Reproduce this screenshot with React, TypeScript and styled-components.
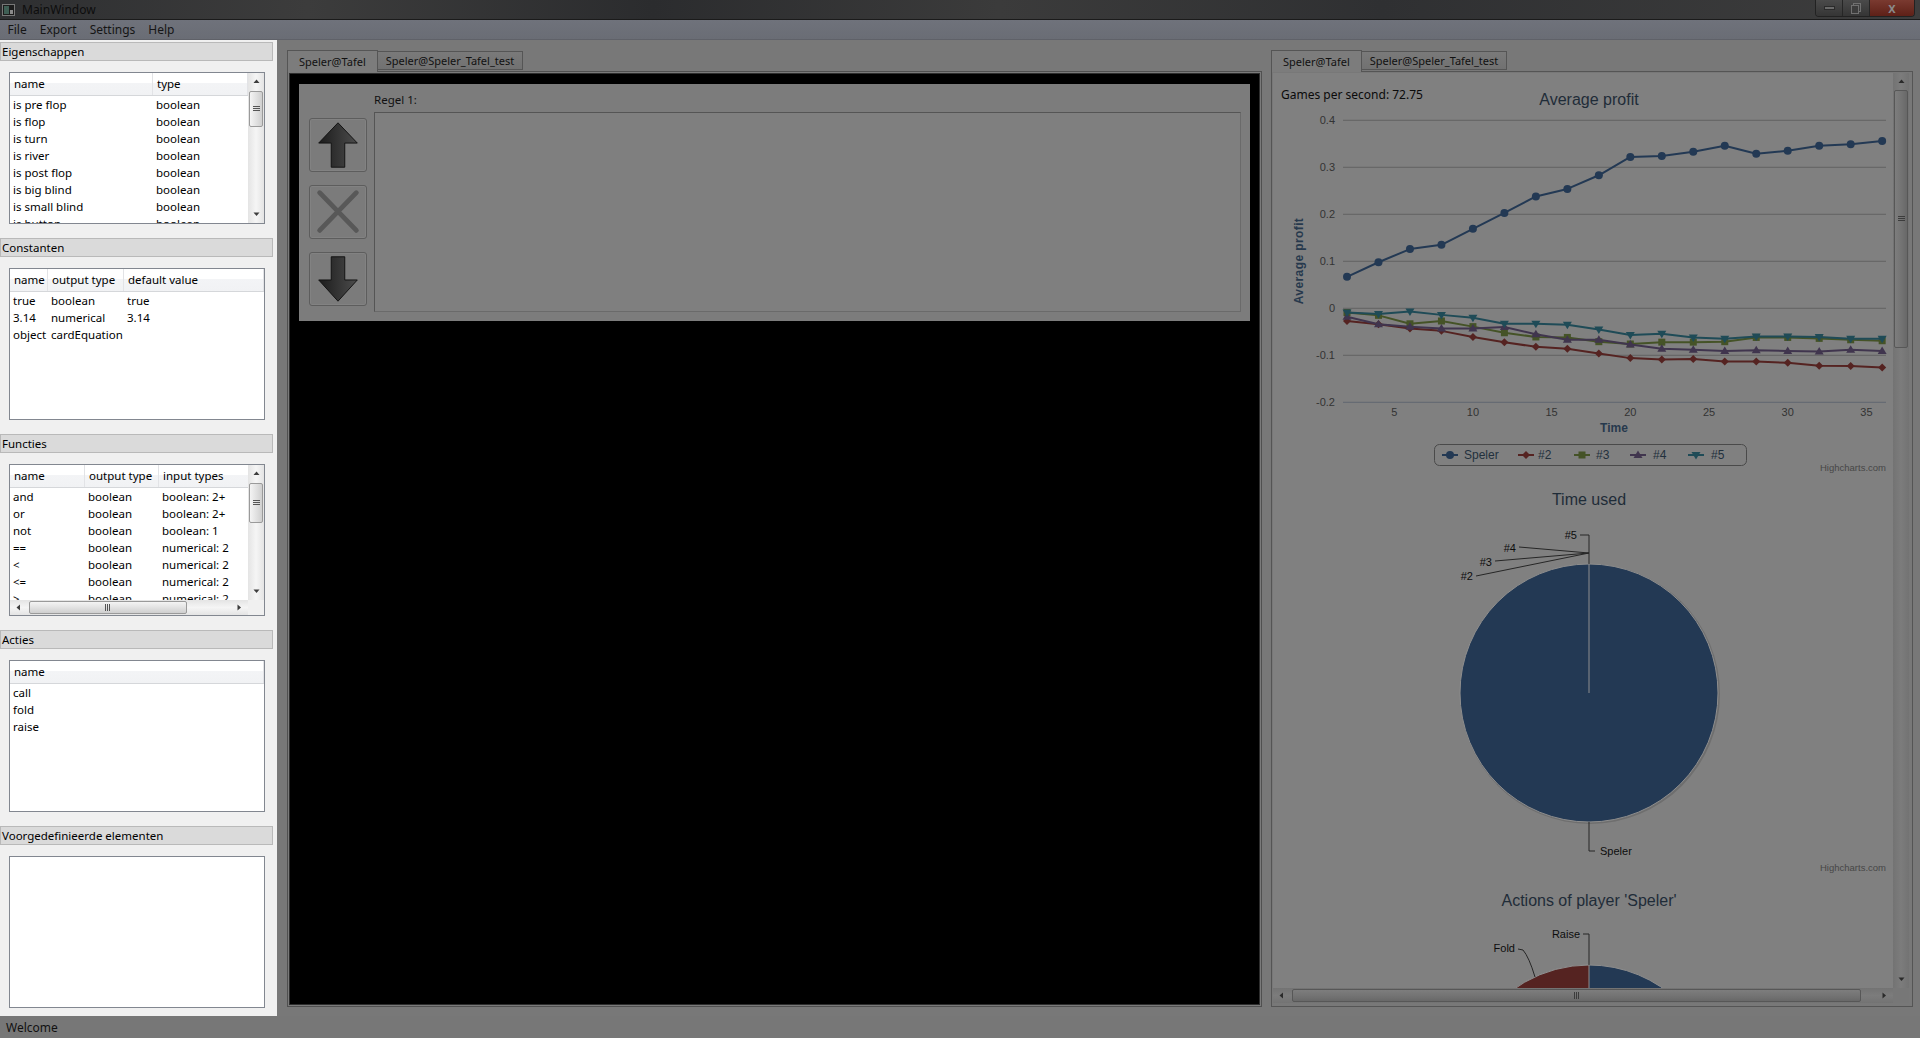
import React from "react";
import styled, { createGlobalStyle } from "styled-components";

const GlobalStyle = createGlobalStyle`
  *, *::before, *::after { box-sizing: border-box; }
  html, body { margin: 0; padding: 0; background: #787878; }
  body {
    font-family: "Noto Sans", "Liberation Sans", sans-serif;
    font-size: 11.5px;
    color: #000;
  }
  #root { width: 1920px; height: 1038px; overflow: hidden; }
`;

/* ---------- window chrome ---------- */

const Window = styled.div`
  width: 1920px;
  height: 1038px;
  display: flex;
  flex-direction: column;
  background: #787878;
`;

const TitleBar = styled.div`
  height: 20px;
  flex: none;
  display: flex;
  align-items: flex-start;
  justify-content: space-between;
  background: linear-gradient(90deg, #2e2f31 0%, #3c3c3c 16%, #2b2c2e 34%, #3b3b3b 52%, #2f3032 72%, #3d3d3d 100%);
  border-bottom: 1px solid #1b1b1b;
`;

const TitleLeft = styled.div`
  display: flex;
  align-items: center;
  gap: 7px;
  height: 19px;
  padding-left: 2px;
`;

const TitleText = styled.span`
  font-size: 12px;
  color: #0d0d0d;
`;

const WindowButtons = styled.div`
  display: flex;
  margin-right: 5px;
  border: 1px solid #222;
  border-top: none;
  border-radius: 0 0 4px 4px;
  overflow: hidden;
  height: 17px;
`;

const WinButton = styled.div<{ $close?: boolean }>`
  width: ${p => (p.$close ? "44px" : "27px")};
  display: flex;
  align-items: center;
  justify-content: center;
  background: ${p =>
    p.$close
      ? "linear-gradient(#7a3a30, #5e2017)"
      : "linear-gradient(#4a4a4a, #353535)"};
  border-right: ${p => (p.$close ? "none" : "1px solid #262626")};
  color: #8a8a8a;
  font-size: 11px;
  font-weight: bold;
`;

const MenuBar = styled.div`
  height: 20px;
  flex: none;
  display: flex;
  align-items: center;
  padding-left: 1px;
  background: linear-gradient(#6f727b, #6a6d75);
  border-bottom: 1px solid #5f6168;
`;

const MenuItem = styled.span`
  padding: 0 6.5px;
  font-size: 12px;
  color: #151515;
`;

const Body = styled.div`
  flex: 1;
  display: flex;
  min-height: 0;
`;

const StatusBar = styled.div`
  height: 22px;
  flex: none;
  display: flex;
  align-items: center;
  padding-left: 6px;
  background: #777;
  font-size: 12px;
  color: #111;
`;

/* ---------- dock ---------- */

const Dock = styled.div`
  width: 277px;
  flex: none;
  background: #f0f0f0;
  padding: 2px 4px 9px 0;
  display: flex;
  flex-direction: column;
`;

const DockSection = styled.section`
  display: flex;
  flex-direction: column;
  margin-bottom: 14px;
`;

const DockHeader = styled.div`
  height: 19px;
  line-height: 17px;
  padding-left: 1px;
  background: #dadada;
  border: 1px solid #b9b9b9;
  font-size: 11.5px;
  color: #000;
`;

const ListBox = styled.div<{ $v: boolean; $h: boolean }>`
  margin: 11px 0 0 9px;
  width: 256px;
  height: 152px;
  border: 1px solid #828790;
  background: #fff;
  display: grid;
  grid-template-columns: ${p => (p.$v ? "minmax(0, 1fr) 16px" : "minmax(0, 1fr)")};
  grid-template-rows: ${p => (p.$h ? "minmax(0, 1fr) 15px" : "minmax(0, 1fr)")};
  overflow: hidden;
`;

const ListContent = styled.div`
  overflow: hidden;
  min-width: 0;
`;

const HeaderRow = styled.div`
  display: flex;
  height: 23px;
  background: linear-gradient(#ffffff 0%, #ffffff 45%, #f3f4f6 46%, #f1f2f4 100%);
  border-bottom: 1px solid #d5d7da;
`;

const HeaderCell = styled.div<{ $width?: number }>`
  flex: ${p => (p.$width ? `0 0 ${p.$width}px` : "1 0 auto")};
  padding-left: 4px;
  line-height: 22px;
  border-right: 1px solid #e2e3e6;
  white-space: nowrap;
`;

const Row = styled.div`
  display: flex;
  height: 17px;
  line-height: 17px;
`;

const Cell = styled.div<{ $width?: number }>`
  flex: ${p => (p.$width ? `0 0 ${p.$width}px` : "1 0 auto")};
  padding-left: 3px;
  white-space: nowrap;
`;

/* ---------- scrollbars ---------- */

type Axis = "v" | "h";

const ScrollBar = styled.div<{ $axis: Axis; $dim?: boolean }>`
  display: flex;
  flex-direction: ${p => (p.$axis === "v" ? "column" : "row")};
  min-width: 0;
  min-height: 0;
  background: ${p =>
    p.$dim
      ? p.$axis === "v"
        ? "linear-gradient(90deg, #737373, #7c7c7c 50%, #737373)"
        : "linear-gradient(#737373, #7c7c7c 50%, #737373)"
      : p.$axis === "v"
      ? "linear-gradient(90deg, #e4e4e4, #f5f5f5 50%, #e4e4e4)"
      : "linear-gradient(#e4e4e4, #f5f5f5 50%, #e4e4e4)"};
`;

const ScrollButton = styled.div<{ $axis: Axis }>`
  flex: none;
  width: ${p => (p.$axis === "v" ? "100%" : "17px")};
  height: ${p => (p.$axis === "v" ? "17px" : "100%")};
  display: flex;
  align-items: center;
  justify-content: center;
`;

const ScrollTrack = styled.div<{ $axis: Axis }>`
  flex: 1;
  display: flex;
  flex-direction: ${p => (p.$axis === "v" ? "column" : "row")};
  align-items: stretch;
  min-width: 0;
  min-height: 0;
  overflow: hidden;
  padding: ${p => (p.$axis === "v" ? "0 1px" : "1px 0")};
`;

const ScrollThumb = styled.div<{ $axis: Axis; $dim?: boolean; $start: number; $size: number }>`
  flex: none;
  ${p => (p.$axis === "v" ? `margin-top: ${p.$start}px; height: ${p.$size}px;` : `margin-left: ${p.$start}px; width: ${p.$size}px;`)}
  border: 1px solid ${p => (p.$dim ? "#575757" : "#9a9a9a")};
  border-radius: 2px;
  background: ${p =>
    p.$dim
      ? `linear-gradient(${p.$axis === "v" ? "90deg" : "180deg"}, #7d7d7d, #747474 50%, #686868)`
      : `linear-gradient(${p.$axis === "v" ? "90deg" : "180deg"}, #f4f4f4, #e2e2e2 50%, #cfcfcf)`};
  display: flex;
  align-items: center;
  justify-content: center;
`;

const ScrollCorner = styled.div<{ $dim?: boolean }>`
  background: ${p => (p.$dim ? "#777" : "#f0f0f0")};
`;

function Arrow({ dir, color }: { dir: "up" | "down" | "left" | "right"; color: string }) {
  const d = {
    up: "M0.5,4 L3.5,0.5 L6.5,4 Z",
    down: "M0.5,0.5 L3.5,4 L6.5,0.5 Z",
    left: "M4,0.5 L0.5,3.5 L4,6.5 Z",
    right: "M0.5,0.5 L4,3.5 L0.5,6.5 Z",
  }[dir];
  const w = dir === "up" || dir === "down" ? 7 : 5;
  const h = dir === "up" || dir === "down" ? 5 : 7;
  return (
    <svg width={w} height={h} viewBox={`0 0 ${w} ${h}`}>
      <path d={d} fill={color} />
    </svg>
  );
}

function Grip({ axis, color }: { axis: Axis; color: string }) {
  return axis === "v" ? (
    <svg width="7" height="6" viewBox="0 0 7 6">
      <path d="M0,0.5 H7 M0,2.5 H7 M0,4.5 H7" stroke={color} strokeWidth="1" />
    </svg>
  ) : (
    <svg width="6" height="7" viewBox="0 0 6 7">
      <path d="M0.5,0 V7 M2.5,0 V7 M4.5,0 V7" stroke={color} strokeWidth="1" />
    </svg>
  );
}

function Scroller({ axis, start, size, dim }: { axis: Axis; start: number; size: number; dim?: boolean }) {
  const arrowColor = dim ? "#2a2a2a" : "#3d3d3d";
  return (
    <ScrollBar $axis={axis} $dim={dim}>
      <ScrollButton $axis={axis}>
        <Arrow dir={axis === "v" ? "up" : "left"} color={arrowColor} />
      </ScrollButton>
      <ScrollTrack $axis={axis}>
        <ScrollThumb $axis={axis} $dim={dim} $start={start} $size={size}>
          <Grip axis={axis} color={dim ? "#3c3c3c" : "#555"} />
        </ScrollThumb>
      </ScrollTrack>
      <ScrollButton $axis={axis}>
        <Arrow dir={axis === "v" ? "down" : "right"} color={arrowColor} />
      </ScrollButton>
    </ScrollBar>
  );
}

/* ---------- dock data ---------- */

type Column = { label: string; width?: number };
type DockList = {
  title: string;
  columns?: Column[];
  rows?: string[][];
  vThumb?: [number, number];
  hThumb?: [number, number];
};

const dockLists: DockList[] = [
  {
    title: "Eigenschappen",
    columns: [{ label: "name", width: 143 }, { label: "type" }],
    rows: [
      ["is pre flop", "boolean"],
      ["is flop", "boolean"],
      ["is turn", "boolean"],
      ["is river", "boolean"],
      ["is post flop", "boolean"],
      ["is big blind", "boolean"],
      ["is small blind", "boolean"],
      ["is button", "boolean"],
    ],
    vThumb: [1, 36],
  },
  {
    title: "Constanten",
    columns: [{ label: "name", width: 38 }, { label: "output type", width: 76 }, { label: "default value" }],
    rows: [
      ["true", "boolean", "true"],
      ["3.14", "numerical", "3.14"],
      ["object", "cardEquation", ""],
    ],
  },
  {
    title: "Functies",
    columns: [{ label: "name", width: 75 }, { label: "output type", width: 74 }, { label: "input types", width: 110 }],
    rows: [
      ["and", "boolean", "boolean: 2+"],
      ["or", "boolean", "boolean: 2+"],
      ["not", "boolean", "boolean: 1"],
      ["==", "boolean", "numerical: 2"],
      ["<", "boolean", "numerical: 2"],
      ["<=", "boolean", "numerical: 2"],
      [">", "boolean", "numerical: 2"],
    ],
    vThumb: [1, 40],
    hThumb: [2, 158],
  },
  {
    title: "Acties",
    columns: [{ label: "name" }],
    rows: [["call"], ["fold"], ["raise"]],
  },
  { title: "Voorgedefinieerde elementen" },
];

function DockPanel({ list }: { list: DockList }) {
  const hasV = !!list.vThumb;
  const hasH = !!list.hThumb;
  return (
    <DockSection>
      <DockHeader>{list.title}</DockHeader>
      <ListBox $v={hasV} $h={hasH}>
        <ListContent>
          {list.columns && (
            <HeaderRow>
              {list.columns.map(c => (
                <HeaderCell key={c.label} $width={c.width}>
                  {c.label}
                </HeaderCell>
              ))}
            </HeaderRow>
          )}
          {list.rows?.map((r, i) => (
            <Row key={i}>
              {r.map((v, j) => (
                <Cell key={j} $width={list.columns?.[j].width}>
                  {v}
                </Cell>
              ))}
            </Row>
          ))}
        </ListContent>
        {list.vThumb && <Scroller axis="v" start={list.vThumb[0]} size={list.vThumb[1]} />}
        {list.hThumb && <Scroller axis="h" start={list.hThumb[0]} size={list.hThumb[1]} />}
        {hasV && hasH && <ScrollCorner />}
      </ListBox>
    </DockSection>
  );
}

/* ---------- tab widgets ---------- */

const Workspace = styled.div`
  flex: 1;
  display: flex;
  gap: 9px;
  padding: 10px 7px 9px 10px;
  min-width: 0;
`;

const TabWidget = styled.div<{ $width: number }>`
  width: ${p => p.$width}px;
  flex: none;
  display: flex;
  flex-direction: column;
`;

const TabBar = styled.div`
  height: 21px;
  flex: none;
  display: flex;
  align-items: flex-end;
  position: relative;
  z-index: 1;
`;

const Tab = styled.div<{ $active?: boolean }>`
  height: ${p => (p.$active ? "22px" : "19px")};
  margin-bottom: ${p => (p.$active ? "-1px" : "1px")};
  padding: ${p => (p.$active ? "0 11px" : "0 8px")};
  display: flex;
  align-items: center;
  font-size: 11px;
  color: #111;
  border: 1px solid #555;
  border-bottom: ${p => (p.$active ? "none" : "1px solid #555")};
  border-left: ${p => (p.$active ? "1px solid #555" : "none")};
  background: ${p => (p.$active ? "#7c7c7c" : "linear-gradient(#7a7a7a, #717171)")};
`;

const EditorPane = styled.div`
  flex: 1;
  display: flex;
  border: 1px solid #505050;
  padding: 1px;
  background: #7a7a7a;
  min-height: 0;
`;

const Canvas = styled.div`
  flex: 1;
  background: #000;
  padding: 10px 9px;
  border: 1px solid #2e2e2e;
`;

const RulePanel = styled.div`
  height: 237px;
  display: flex;
  padding: 0 9px 9px 10px;
  background: #7c7c7c;
`;

const ButtonColumn = styled.div`
  width: 58px;
  flex: none;
  display: flex;
  flex-direction: column;
  gap: 13px;
  padding-top: 34px;
`;

const ToolButton = styled.div`
  height: 54px;
  border: 1px solid #5d5d5d;
  border-radius: 3px;
  background: #7b7b7b;
  box-shadow: inset 0 0 0 1px #828282;
  display: flex;
  align-items: center;
  justify-content: center;
`;

const RuleBody = styled.div`
  flex: 1;
  display: flex;
  flex-direction: column;
  margin-left: 7px;
`;

const RuleLabel = styled.div`
  height: 28px;
  line-height: 32px;
  font-size: 11.5px;
  color: #111;
`;

const RuleEditor = styled.div`
  flex: 1;
  border: 1px solid #555;
  border-right-color: #6a6a6a;
  border-bottom-color: #6a6a6a;
  background: #7f7f7f;
`;

const StatsPane = styled.div`
  flex: 1;
  border: 1px solid #555;
  padding: 1px 3px 3px 1px;
  background: #787878;
  min-height: 0;
  display: flex;
`;

const ScrollArea = styled.div`
  flex: 1;
  display: grid;
  grid-template-columns: minmax(0, 1fr) 16px;
  grid-template-rows: minmax(0, 1fr) 15px;
`;

const Viewport = styled.div`
  overflow: hidden;
  background: #808080;
`;

const ChartStack = styled.div`
  position: relative;
  display: flex;
  flex-direction: column;
`;

const GamesLabel = styled.div`
  position: absolute;
  top: 13px;
  left: 8px;
  font-size: 12px;
  color: #0a0a0a;
`;

/* ---------- charts ---------- */

const ChartSvg = styled.svg`
  display: block;
  flex: none;
  width: 619px;
  height: 400px;
  font-family: "Liberation Sans", Arial, sans-serif;
`;

const ChartTitle = styled.text`
  font-size: 16px;
  fill: #1f2c38;
`;

const AxisLabel = styled.text`
  font-size: 11px;
  fill: #333;
`;

const AxisTitle = styled.text`
  font-size: 12px;
  font-weight: bold;
  fill: #27394d;
`;

const LegendText = styled.text`
  font-size: 12px;
  fill: #22303d;
`;

const Credits = styled.text`
  font-size: 9.5px;
  fill: #474747;
`;

const DataLabel = styled.text`
  font-size: 11px;
  fill: #0d0d0d;
`;

type MarkerKind = "circle" | "diamond" | "square" | "triangle" | "triangle-down";

function Marker({ kind, x, y, color }: { kind: MarkerKind; x: number; y: number; color: string }) {
  switch (kind) {
    case "circle":
      return <circle cx={x} cy={y} r={4} fill={color} />;
    case "diamond":
      return <polygon points={`${x},${y - 4} ${x + 4},${y} ${x},${y + 4} ${x - 4},${y}`} fill={color} />;
    case "square":
      return <rect x={x - 3.5} y={y - 3.5} width={7} height={7} fill={color} />;
    case "triangle":
      return <polygon points={`${x},${y - 4.5} ${x + 4.5},${y + 3} ${x - 4.5},${y + 3}`} fill={color} />;
    default:
      return <polygon points={`${x},${y + 4.5} ${x + 4.5},${y - 3} ${x - 4.5},${y - 3}`} fill={color} />;
  }
}

type Series = { name: string; color: string; marker: MarkerKind; data: number[] };

const series: Series[] = [
  {
    name: "Speler",
    color: "#233954",
    marker: "circle",
    data: [0.067, 0.098, 0.126, 0.135, 0.169, 0.203, 0.238, 0.254, 0.283, 0.322, 0.324, 0.333, 0.346, 0.329, 0.335, 0.346, 0.349, 0.356],
  },
  {
    name: "#2",
    color: "#552321",
    marker: "diamond",
    data: [-0.027, -0.034, -0.043, -0.048, -0.061, -0.072, -0.082, -0.086, -0.096, -0.106, -0.109, -0.108, -0.113, -0.113, -0.116, -0.122, -0.123, -0.126],
  },
  {
    name: "#3",
    color: "#455327",
    marker: "square",
    data: [-0.009, -0.015, -0.033, -0.027, -0.039, -0.052, -0.061, -0.062, -0.071, -0.076, -0.072, -0.072, -0.071, -0.062, -0.062, -0.064, -0.067, -0.069],
  },
  {
    name: "#4",
    color: "#40354e",
    marker: "triangle",
    data: [-0.018, -0.034, -0.039, -0.043, -0.043, -0.04, -0.055, -0.067, -0.067, -0.077, -0.086, -0.088, -0.091, -0.089, -0.091, -0.092, -0.088, -0.091],
  },
  {
    name: "#5",
    color: "#1f4b57",
    marker: "triangle-down",
    data: [-0.009, -0.012, -0.007, -0.014, -0.02, -0.033, -0.033, -0.035, -0.045, -0.057, -0.054, -0.062, -0.065, -0.06, -0.06, -0.061, -0.065, -0.065],
  },
];

const xPos = (t: number) => 74 + (t - 2) * 15.74;
const yPos = (v: number) => 235.3 - v * 470;

const legendSlots = [
  { marker: 177, text: 191 },
  { marker: 253, text: 265 },
  { marker: 309, text: 323 },
  { marker: 365, text: 380 },
  { marker: 423, text: 438 },
];

function ProfitChart() {
  const ticks = [0.4, 0.3, 0.2, 0.1, 0, -0.1, -0.2];
  return (
    <ChartSvg viewBox="0 0 619 400">
      <ChartTitle x={316} y={32} textAnchor="middle">
        Average profit
      </ChartTitle>
      {ticks.map(v => (
        <g key={v}>
          <line x1={70} x2={613} y1={yPos(v)} y2={yPos(v)} stroke={v === -0.2 ? "#5f6670" : "#626262"} strokeWidth={1} />
          <AxisLabel x={62} y={yPos(v) + 4} textAnchor="end">
            {v === 0 ? "0" : v.toFixed(1)}
          </AxisLabel>
        </g>
      ))}
      {[5, 10, 15, 20, 25, 30, 35].map(t => (
        <AxisLabel key={t} x={xPos(t)} y={343} textAnchor="middle">
          {t}
        </AxisLabel>
      ))}
      <AxisTitle x={341} y={359} textAnchor="middle">
        Time
      </AxisTitle>
      <AxisTitle transform="translate(30,188) rotate(-90)" textAnchor="middle" letterSpacing="0.4">
        Average profit
      </AxisTitle>
      {series.map(s => {
        const pts = s.data.map((v, i) => [xPos(2 + i * 2), yPos(v)] as const);
        return (
          <g key={s.name}>
            <polyline
              points={pts.map(p => `${p[0]},${p[1]}`).join(" ")}
              fill="none"
              stroke={s.color}
              strokeWidth={2}
              strokeLinejoin="round"
            />
            {pts.map((p, i) => (
              <Marker key={i} kind={s.marker} x={p[0]} y={p[1]} color={s.color} />
            ))}
          </g>
        );
      })}
      <rect x={161.5} y={371.5} width={312} height={21} rx={5} fill="none" stroke="#4a4a4a" />
      {series.map((s, i) => (
        <g key={s.name}>
          <line x1={legendSlots[i].marker - 8} x2={legendSlots[i].marker + 8} y1={382} y2={382} stroke={s.color} strokeWidth={2} />
          <Marker kind={s.marker} x={legendSlots[i].marker} y={382} color={s.color} />
          <LegendText x={legendSlots[i].text} y={386}>
            {s.name}
          </LegendText>
        </g>
      ))}
      <Credits x={613} y={398} textAnchor="end">
        Highcharts.com
      </Credits>
    </ChartSvg>
  );
}

function TimeChart() {
  const cx = 316;
  const cy = 220;
  const r = 129;
  return (
    <ChartSvg viewBox="0 0 619 400">
      <ChartTitle x={cx} y={32} textAnchor="middle">
        Time used
      </ChartTitle>
      <circle cx={cx + 1} cy={cy + 1} r={r + 1} fill="#6e6e6e" />
      <circle cx={cx} cy={cy} r={r} fill="#233954" stroke="#8e8e8e" strokeWidth={1} />
      <line x1={cx} y1={cy} x2={cx} y2={cy - r} stroke="#8e8e8e" strokeWidth={1} />
      <g stroke="#262626" strokeWidth={1} fill="none">
        <path d={`M${cx},${cy - r} L${cx},62 L${cx - 9},62`} />
        <path d={`M${cx},80 L246,74`} />
        <path d={`M${cx},80 L222,88`} />
        <path d={`M${cx},80 L203,103`} />
        <path d={`M${cx},${cy + r} L${cx},378 L${cx + 6},378`} />
      </g>
      <DataLabel x={304} y={66} textAnchor="end">
        #5
      </DataLabel>
      <DataLabel x={243} y={79} textAnchor="end">
        #4
      </DataLabel>
      <DataLabel x={219} y={93} textAnchor="end">
        #3
      </DataLabel>
      <DataLabel x={200} y={107} textAnchor="end">
        #2
      </DataLabel>
      <DataLabel x={327} y={382}>
        Speler
      </DataLabel>
      <Credits x={613} y={398} textAnchor="end">
        Highcharts.com
      </Credits>
    </ChartSvg>
  );
}

function ActionsChart() {
  const cx = 316;
  const cy = 221;
  const r = 129;
  const a = (300 * Math.PI) / 180;
  const fx = cx + r * Math.sin(a);
  const fy = cy - r * Math.cos(a);
  return (
    <ChartSvg viewBox="0 0 619 400">
      <ChartTitle x={cx} y={33} textAnchor="middle">
        Actions of player 'Speler'
      </ChartTitle>
      <circle cx={cx} cy={cy} r={r} fill="#233954" stroke="#8e8e8e" strokeWidth={1} />
      <path d={`M${cx},${cy} L${fx},${fy} A${r},${r} 0 0,1 ${cx},${cy - r} Z`} fill="#552321" stroke="#8e8e8e" strokeWidth={1} />
      <g stroke="#262626" strokeWidth={1} fill="none">
        <path d={`M310,61 L${cx},61 L${cx},${cy - r}`} />
        <path d="M245,76 L250,77 Q256,84 262,104" />
      </g>
      <DataLabel x={307} y={65} textAnchor="end">
        Raise
      </DataLabel>
      <DataLabel x={242} y={79} textAnchor="end">
        Fold
      </DataLabel>
    </ChartSvg>
  );
}

/* ---------- icons ---------- */

function AppIcon() {
  return (
    <svg width="13" height="12" viewBox="0 0 13 12">
      <rect x="0.5" y="0.5" width="12" height="11" fill="#1c1c1c" stroke="#777" />
      <rect x="2" y="2" width="5" height="8" fill="#3f5f55" />
      <rect x="8" y="6" width="3" height="4" fill="#8a8a8a" />
    </svg>
  );
}

function UpArrowIcon() {
  return (
    <svg width="58" height="54" viewBox="0 0 58 54">
      <defs>
        <linearGradient id="arrowFillUp" x1="0" y1="0" x2="1" y2="0">
          <stop offset="0" stopColor="#1c1c1c" />
          <stop offset="1" stopColor="#4c4c4c" />
        </linearGradient>
      </defs>
      <polygon points="29,4 49,25 36,25 36,50 22,50 22,25 9,25" fill="url(#arrowFillUp)" stroke="#121212" strokeWidth="1" />
    </svg>
  );
}

function DownArrowIcon() {
  return (
    <svg width="58" height="54" viewBox="0 0 58 54">
      <defs>
        <linearGradient id="arrowFillDown" x1="0" y1="0" x2="1" y2="0">
          <stop offset="0" stopColor="#1c1c1c" />
          <stop offset="1" stopColor="#4c4c4c" />
        </linearGradient>
      </defs>
      <polygon points="22,4 36,4 36,28 49,28 29,50 9,28 22,28" fill="url(#arrowFillDown)" stroke="#121212" strokeWidth="1" />
    </svg>
  );
}

function DeleteIcon() {
  return (
    <svg width="58" height="54" viewBox="0 0 58 54">
      <path d="M10,7 L48,46 M48,7 L10,46" stroke="#585858" strokeWidth="5" strokeLinecap="round" />
    </svg>
  );
}

export default function App() {
  return (
    <>
      <GlobalStyle />
      <Window>
        <TitleBar>
          <TitleLeft>
            <AppIcon />
            <TitleText>MainWindow</TitleText>
          </TitleLeft>
          <WindowButtons>
            <WinButton>
              <svg width="11" height="4" viewBox="0 0 11 4">
                <rect x="0.5" y="0.5" width="10" height="3" fill="#6a6a6a" stroke="#2a2a2a" />
              </svg>
            </WinButton>
            <WinButton>
              <svg width="10" height="11" viewBox="0 0 10 11">
                <rect x="2.5" y="0.5" width="7" height="8" fill="none" stroke="#707070" />
                <rect x="0.5" y="2.5" width="7" height="8" fill="#3c3c3c" stroke="#707070" />
              </svg>
            </WinButton>
            <WinButton $close>X</WinButton>
          </WindowButtons>
        </TitleBar>
        <MenuBar>
          {["File", "Export", "Settings", "Help"].map(m => (
            <MenuItem key={m}>{m}</MenuItem>
          ))}
        </MenuBar>
        <Body>
          <Dock>
            {dockLists.map(l => (
              <DockPanel key={l.title} list={l} />
            ))}
          </Dock>
          <Workspace>
            <TabWidget $width={975}>
              <TabBar>
                <Tab $active>Speler@Tafel</Tab>
                <Tab>Speler@Speler_Tafel_test</Tab>
              </TabBar>
              <EditorPane>
                <Canvas>
                  <RulePanel>
                    <ButtonColumn>
                      <ToolButton>
                        <UpArrowIcon />
                      </ToolButton>
                      <ToolButton>
                        <DeleteIcon />
                      </ToolButton>
                      <ToolButton>
                        <DownArrowIcon />
                      </ToolButton>
                    </ButtonColumn>
                    <RuleBody>
                      <RuleLabel>Regel 1:</RuleLabel>
                      <RuleEditor />
                    </RuleBody>
                  </RulePanel>
                </Canvas>
              </EditorPane>
            </TabWidget>
            <TabWidget $width={642}>
              <TabBar>
                <Tab $active>Speler@Tafel</Tab>
                <Tab>Speler@Speler_Tafel_test</Tab>
              </TabBar>
              <StatsPane>
                <ScrollArea>
                  <Viewport>
                    <ChartStack>
                      <GamesLabel>Games per second: 72.75</GamesLabel>
                      <ProfitChart />
                      <TimeChart />
                      <ActionsChart />
                    </ChartStack>
                  </Viewport>
                  <Scroller axis="v" start={0} size={258} dim />
                  <Scroller axis="h" start={2} size={569} dim />
                  <ScrollCorner $dim />
                </ScrollArea>
              </StatsPane>
            </TabWidget>
          </Workspace>
        </Body>
        <StatusBar>Welcome</StatusBar>
      </Window>
    </>
  );
}
